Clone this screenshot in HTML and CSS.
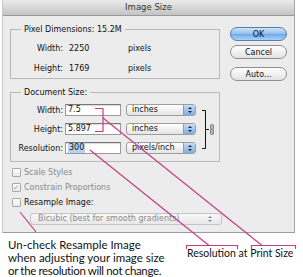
FILE: index.html
```html
<!DOCTYPE html>
<html lang="en">
<head>
  <meta charset="UTF-8">
  <title>Image Size</title>
  <link rel="stylesheet" href="styles.css">
</head>
<body>

<div class="page">
  <div class="dialog">
    <div class="titlebar">Image Size</div>

    <div class="dialog-body">
      <div class="main">

        <div class="group pixel-group">
          <span class="group-title">Pixel Dimensions: <b class="plain">15.2M</b></span>
          <div class="rows">
            <div class="row"><span class="label">Width:</span><span class="value">2250</span><span>pixels</span></div>
            <div class="row"><span class="label">Height:</span><span class="value">1769</span><span>pixels</span></div>
          </div>
        </div>

        <div class="group doc-group">
          <span class="group-title">Document Size:</span>
          <div class="doc-rows">
            <div class="fields">
              <div class="field-row">
                <span class="label">Width:</span>
                <span class="input">7.5</span>
                <span class="select">inches<i class="stepper"></i></span>
              </div>
              <div class="field-row">
                <span class="label">Height:</span>
                <span class="input">5.897</span>
                <span class="select">inches<i class="stepper"></i></span>
              </div>
              <div class="field-row">
                <span class="label">Resolution:</span>
                <span class="input"><span class="selected">300</span></span>
                <span class="select">pixels/inch<i class="stepper"></i></span>
              </div>
            </div>
            <!-- bracket + chain for constrain proportions -->
            <svg class="link" width="16" height="46" viewBox="0 0 16 46">
              <path d="M1 6.5 H4.5 V44.5 H1 M4.5 25.5 H8" fill="none" stroke="#111" stroke-width="1"/>
              <rect x="9.5" y="20.5" width="3" height="5" rx="1.2" fill="#bbb" stroke="#777"/>
              <rect x="9.5" y="25.5" width="3" height="5" rx="1.2" fill="#bbb" stroke="#777"/>
            </svg>
          </div>
        </div>

        <div class="checks">
          <label class="check disabled"><i class="box"></i>Scale Styles</label>
          <label class="check disabled"><i class="box">&#10003;</i>Constrain Proportions</label>
          <label class="check"><i class="box"></i>Resample Image:</label>
        </div>

        <div class="method">Bicubic (best for smooth gradients)<i class="stepper grey"></i></div>
      </div>

      <div class="buttons">
        <button class="btn btn-default">OK</button>
        <button class="btn">Cancel</button>
        <button class="btn btn-auto">Auto...</button>
      </div>
    </div>
  </div>

  <div class="notes">
    <p class="note-left">Un-check Resample Image<br>when adjusting your image size<br><span class="tight">or the resolution will not change.</span></p>
    <p class="note-right">Resolution at Print Size</p>
  </div>

  <!-- pink callout lines drawn over the screenshot -->
  <svg class="callouts" width="303" height="277" viewBox="0 0 303 277">
    <g fill="none" stroke="#c63d87" stroke-width="1.2">
      <path d="M95 108.5 H103 V131.5 H95"/>
      <path d="M103 118 L262 245.5"/>
      <path d="M90 150 L209 245.5"/>
      <path d="M20 212 L36 232"/>
      <path d="M186.5 249 V245.5 H237.5 V249"/>
      <path d="M251.5 249 V245.5 H295.5 V249"/>
    </g>
  </svg>
</div>

</body>
</html>
```

FILE: styles.css
```css
body {
    margin: 0;
    background: #fff;
    font-family: "DejaVu Sans", sans-serif;
    font-size: 8px;
    color: #111;
}
.page {
    position: relative;
    width: 303px;
    height: 277px;
    overflow: hidden;
}

.dialog {
    margin-left: 2px;
    width: 291px;
    height: 232px;
    background: #ececec;
    border-left: 1px solid #c9c9c9;
    border-right: 1px solid #a4a4a4;
    border-bottom: 1px solid #9c9c9c;
}
.titlebar {
    height: 15px;
    line-height: 15px;
    text-align: center;
    font-size: 8.5px;
    color: #333;
    background: linear-gradient(#ebebeb, #c4c4c4);
    border-bottom: 1px solid #9a9a9a;
}
.dialog-body {
    display: flex;
    padding: 13px 0 0 7px;
}
.main {
    width: 210px;
}

.group {
    border: 1px solid #b8b8b8;
}
.group-title {
    display: block;
    width: fit-content;
    margin: -6px 0 0 10px;
    padding: 0 3px;
    line-height: 11px;
    background: #ececec;
}
.plain {
    font-weight: normal;
}
.pixel-group {
    height: 48px;
}
.rows {
    display: flex;
    flex-direction: column;
    gap: 6px;
    padding-top: 6px;
}
.row {
    display: flex;
    align-items: center;
    height: 14px;
}
.label {
    width: 52px;
    text-align: right;
}
.value {
    width: 59px;
    margin-left: 6px;
}

.doc-group {
    margin-top: 13px;
    height: 68px;
}
.doc-rows {
    display: flex;
    padding-top: 6px;
}
.fields {
    display: flex;
    flex-direction: column;
    gap: 7px;
}
.field-row {
    display: flex;
    align-items: center;
    height: 12px;
}
.input {
    width: 52px;
    height: 10px;
    line-height: 10px;
    margin-left: 2px;
    padding-left: 2px;
    background: #fff;
    border: 1px solid #9a9a9a;
    border-top-color: #777;
    box-shadow: inset 0 1px 1px rgba(0,0,0,0.15);
}
.selected {
    display: inline-block;
    background: #b6d3f5;
    padding: 0 1px;
}
.select {
    position: relative;
    width: 63px;
    height: 10px;
    line-height: 10px;
    margin-left: 5px;
    padding-left: 5px;
    border: 1px solid #9e9e9e;
    border-radius: 3px;
    background: linear-gradient(#ffffff, #e4e4e4);
}
.stepper {
    position: absolute;
    top: 0;
    right: 0;
    width: 11px;
    height: 10px;
    border-left: 1px solid #7d9fca;
    border-radius: 0 2px 2px 0;
    background: linear-gradient(#c9ddf3, #7eaee2);
}
.stepper::before,
.stepper::after {
    content: "";
    position: absolute;
    left: 4px;
    border-left: 2px solid transparent;
    border-right: 2px solid transparent;
}
.stepper::before {
    top: 2px;
    border-bottom: 2px solid #223;
}
.stepper::after {
    top: 6px;
    border-top: 2px solid #223;
}
.stepper.grey {
    right: 6px;
    border-left: none;
    background: none;
}
.stepper.grey::before {
    border-bottom-color: #888;
}
.stepper.grey::after {
    border-top-color: #888;
}
.link {
    margin: 0 0 0 5px;
}

.checks {
    display: flex;
    flex-direction: column;
    margin-top: 3px;
}
.check {
    display: flex;
    align-items: center;
    height: 15px;
    padding-left: 2px;
}
.check.disabled {
    color: #8a8a8a;
}
.box {
    width: 7px;
    height: 7px;
    margin-right: 3px;
    border: 1px solid #a8a8a8;
    border-radius: 1px;
    background: linear-gradient(#fff, #e8e8e8);
    font-style: normal;
    font-size: 8px;
    line-height: 7px;
    color: #999;
}
.method {
    position: relative;
    width: 183px;
    height: 10px;
    line-height: 10px;
    margin: 3px 0 0 20px;
    padding-left: 7px;
    color: #8a8a8a;
    border: 1px solid #c4c4c4;
    border-radius: 3px;
    background: linear-gradient(#f8f8f8, #e8e8e8);
}

.buttons {
    display: flex;
    flex-direction: column;
    margin: -2px 0 0 10px;
}
.btn {
    width: 57px;
    height: 14px;
    padding: 0;
    font-family: "DejaVu Sans", sans-serif;
    font-size: 8px;
    color: #111;
    border: 1px solid #8e8e8e;
    border-radius: 7px;
    background: linear-gradient(#ffffff, #e2e2e2);
    margin-bottom: 4px;
}
.btn-default {
    border-color: #5a7fae;
    background: linear-gradient(#cfe3f7, #8fbfee 50%, #6eaae6 51%, #a9d2f5);
}
.btn-auto {
    margin-top: 4px;
}

.notes {
    display: flex;
    padding: 5px 0 0 8px;
    font-family: Lato, "Open Sans", sans-serif;
    font-size: 11.5px;
    line-height: 13px;
    color: #111;
}
.notes p {
    margin: 0;
}
.note-left {
    width: 179px;
    flex: none;
}
.tight {
    letter-spacing: -0.35px;
}
.note-right {
    padding-top: 9px;
    font-size: 10.5px;
    white-space: nowrap;
}

.callouts {
    position: absolute;
    top: 0;
    left: 0;
    pointer-events: none;
}
```
